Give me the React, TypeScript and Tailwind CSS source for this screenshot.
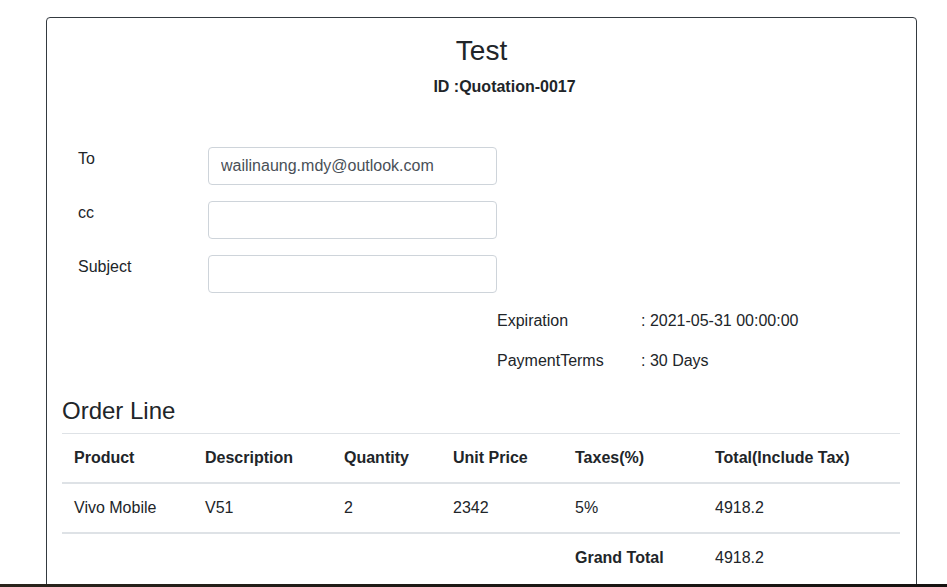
const font = { fontFamily: '"Liberation Sans", Arial, sans-serif' };

const fields = [
  { label: "To", value: "wailinaung.mdy@outlook.com" },
  { label: "cc", value: "" },
  { label: "Subject", value: "" },
];

const info = [
  { label: "Expiration", value: ": 2021-05-31 00:00:00" },
  { label: "PaymentTerms", value: ": 30 Days" },
];

const cols = [
  { name: "Product", w: "w-[131px]" },
  { name: "Description", w: "w-[139px]" },
  { name: "Quantity", w: "w-[109px]" },
  { name: "Unit Price", w: "w-[122px]" },
  { name: "Taxes(%)", w: "w-[140px]" },
  { name: "Total(Include Tax)", w: "" },
];

const rows = [["Vivo Mobile", "V51", "2", "2342", "5%", "4918.2"]];

export default function App() {
  return (
    <div className="h-[587px] overflow-hidden bg-white text-[#212529]" style={font}>
      <div className="h-[584px] overflow-hidden pt-[17px] pl-[46px]">
        <div className="w-[871px] h-[700px] rounded border border-[#343a40] px-[15px] pt-[16px]">
          <h3 className="text-center text-[28px] leading-[1.2] mb-[7px]">Test</h3>
          <p className="pl-[46px] text-center text-base font-bold leading-6">ID :Quotation-0017</p>

          <div className="mt-12 flex flex-col gap-4">
            {fields.map((f) => (
              <div key={f.label} className="flex items-start">
                <label className="w-[146px] shrink-0 pl-4 text-base leading-6">{f.label}</label>
                <input
                  readOnly
                  value={f.value}
                  className="w-[289px] h-[38px] rounded border border-[#ced4da] px-3 text-base text-[#495057] outline-none"
                  style={font}
                />
              </div>
            ))}
          </div>

          <div className="mt-4 ml-[435px] flex flex-col gap-4">
            {info.map((i) => (
              <div key={i.label} className="flex text-base leading-6">
                <span className="w-[144px]">{i.label}</span>
                <span>{i.value}</span>
              </div>
            ))}
          </div>

          <h4 className="mt-6 mb-2 text-2xl leading-[1.2]">Order Line</h4>

          <table className="w-[838px] border-collapse text-base leading-6">
            <thead>
              <tr className="border-t border-[#dee2e6] border-b-2">
                {cols.map((c) => (
                  <th key={c.name} className={`${c.w} p-3 text-left font-bold`}>
                    {c.name}
                  </th>
                ))}
              </tr>
            </thead>
            <tbody>
              {rows.map((r, idx) => (
                <tr key={idx} className="border-b-2 border-[#dee2e6]">
                  {r.map((cell, j) => (
                    <td key={j} className="p-3">
                      {cell}
                    </td>
                  ))}
                </tr>
              ))}
              <tr>
                <td className="p-3" />
                <td className="p-3" />
                <td className="p-3" />
                <td className="p-3" />
                <td className="p-3 font-bold">Grand Total</td>
                <td className="p-3">4918.2</td>
              </tr>
            </tbody>
          </table>
        </div>
      </div>
      <div className="h-[3px] bg-gradient-to-r from-[#2a241c] via-[#1c1814] to-[#161210]" />
    </div>
  );
}
